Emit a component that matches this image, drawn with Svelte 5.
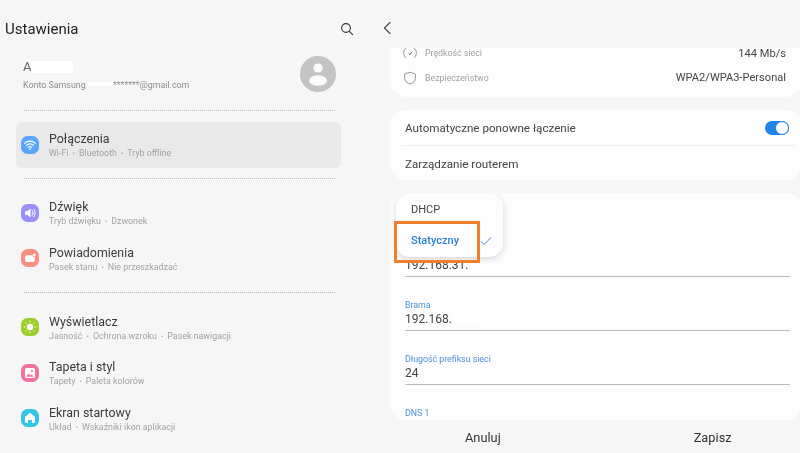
<script>
  const groups = [
    [{ t: 'Połączenia', s: ['Wi-Fi', 'Bluetooth', 'Tryb offline'], c: '#5aa5fb', i: 'wifi', active: true }],
    [
      { t: 'Dźwięk', s: ['Tryb dźwięku', 'Dzwonek'], c: '#9a90f8', i: 'sound' },
      { t: 'Powiadomienia', s: ['Pasek stanu', 'Nie przeszkadzać'], c: '#fb8f82', i: 'notif' }
    ],
    [
      { t: 'Wyświetlacz', s: ['Jasność', 'Ochrona wzroku', 'Pasek nawigacji'], c: '#9ccf2c', i: 'sun' },
      { t: 'Tapeta i styl', s: ['Tapety', 'Paleta kolorów'], c: '#f2739a', i: 'wall' },
      { t: 'Ekran startowy', s: ['Układ', 'Wskaźniki ikon aplikacji'], c: '#35c5e8', i: 'home' }
    ]
  ];
  const fields = [
    { l: 'Brama', v: '192.168.', blur: true },
    { l: 'Długość prefiksu sieci', v: '24' }
  ];
</script>

<div class="screen">
  <section class="left">
    <header class="lhead">
      <h1>Ustawienia</h1>
      <svg class="search" viewBox="0 0 14 14" width="14" height="14" fill="none" stroke="#333" stroke-width="1.1"><circle cx="6" cy="6" r="4.4" /><path d="M9.3 9.3 12.6 12.6" stroke-linecap="round" /></svg>
    </header>

    <div class="profile">
      <div class="who">
        <div class="name"><span class="letter">A</span><span class="smudge"></span></div>
        <div class="acct">Konto Samsung <span class="gap"></span>*******@gmail.com</div>
      </div>
      <svg class="avatar" viewBox="0 0 36 36" width="36" height="36">
        <circle cx="18" cy="18" r="18" fill="#c4c4c4" />
        <circle cx="18" cy="12" r="4.6" fill="#fbfbfb" />
        <ellipse cx="18" cy="24.5" rx="9" ry="5.2" fill="#fbfbfb" />
      </svg>
    </div>

    {#each groups as g}
      <div class="dots"></div>
      <div class="group">
        {#each g as it}
          <div class="item" class:active={it.active}>
            <svg class="ico" viewBox="0 0 18 18" width="18" height="18">
              <rect width="18" height="18" rx="6.5" fill={it.c} />
              {#if it.i === 'wifi'}
                <g fill="none" stroke="#fff" stroke-width="1.1" stroke-linecap="round">
                  <path d="M3.6 7.4a7.6 7.6 0 0 1 10.8 0" />
                  <path d="M5.4 9.4a5 5 0 0 1 7.2 0" />
                  <path d="M7.2 11.3a2.5 2.5 0 0 1 3.6 0" />
                </g>
                <circle cx="9" cy="13" r="0.9" fill="#fff" />
              {:else if it.i === 'sound'}
                <path d="M4 7.2h2.2L9.6 4.6v8.8L6.2 10.8H4z" fill="#fff" />
                <path d="M11.2 6.6a3.4 3.4 0 0 1 0 4.8M12.7 5.2a5.4 5.4 0 0 1 0 7.6" fill="none" stroke="#fff" stroke-width="1" stroke-linecap="round" />
              {:else if it.i === 'notif'}
                <path d="M5.8 6.2h6.4a1.6 1.6 0 0 1 1.6 1.6v2.6a2.6 2.6 0 0 1-2.6 2.6H6.6a2.6 2.6 0 0 1-2.6-2.6V8a1.8 1.8 0 0 1 1.8-1.8z" fill="#fff" />
                <circle cx="13.2" cy="6" r="1.7" fill="#fff" stroke={it.c} stroke-width="0.7" />
              {:else if it.i === 'sun'}
                <circle cx="9" cy="9" r="3.2" fill="#fff" />
                <g stroke="#fff" stroke-width="1" stroke-linecap="round">
                  <path d="M9 3.2v.6M9 14.2v.6M3.2 9h.6M14.2 9h.6M4.9 4.9l.4.4M12.7 12.7l.4.4M4.9 13.1l.4-.4M12.7 5.3l.4-.4" />
                </g>
              {:else if it.i === 'wall'}
                <rect x="4" y="4" width="10" height="10" rx="1.6" fill="#fff" />
                <circle cx="11" cy="7" r="1.1" fill={it.c} />
                <path d="M5 12.8l2.6-3.4 2 2 1.2-1 2.2 2.4z" fill={it.c} />
              {:else}
                <path d="M9 3.8 14 8v4.4a1.6 1.6 0 0 1-1.6 1.6H11v-3H7v3H5.6A1.6 1.6 0 0 1 4 12.4V8z" fill="#fff" />
              {/if}
            </svg>
            <div class="itxt">
              <div class="ttl">{it.t}</div>
              <div class="sub">
                {#each it.s as s, i}{#if i > 0}<span class="sep">•</span>{/if}{s}{/each}
              </div>
            </div>
          </div>
        {/each}
      </div>
    {/each}
  </section>

  <section class="right">
    <header class="rhead">
      <svg viewBox="0 0 10 14" width="10" height="14" fill="none" stroke="#444" stroke-width="1.1"><path d="M8 1.5 2.4 7 8 12.5" stroke-linecap="round" stroke-linejoin="round" /></svg>
    </header>

    <div class="card info">
      <div class="irow">
        <svg viewBox="0 0 14 14" width="14" height="14" fill="none" stroke="#999" stroke-width="1"><path d="M3 12A6.4 6.4 0 1 1 11 12" /><path d="M5.6 7.6 6.8 8.8 9 5.6" stroke="#666" /></svg>
        <span class="ilabel">Prędkość sieci</span><span class="ival">144 Mb/s</span>
      </div>
      <div class="irow">
        <svg viewBox="0 0 14 14" width="14" height="14" fill="none" stroke="#999" stroke-width="1"><path d="M7 1.2 12.4 3v4.2c0 2.9-2.3 4.8-5.4 5.8-3.1-1-5.4-2.9-5.4-5.8V3z" stroke-linejoin="round" /></svg>
        <span class="ilabel">Bezpieczeństwo</span><span class="ival">WPA2/WPA3-Personal</span>
      </div>
    </div>

    <div class="card opts">
      <div class="orow bordered">
        <span>Automatyczne ponowne łączenie</span>
        <span class="toggle"><i></i></span>
      </div>
      <div class="orow"><span>Zarządzanie routerem</span></div>
    </div>

    <div class="card form">
      <div class="field first">
        <div class="val">192.168.31.<span class="smudge2"></span></div>
      </div>
      {#each fields as f}
        <div class="field">
          <div class="lab">{f.l}</div>
          <div class="val">{f.v}{#if f.blur}<span class="smudge2"></span>{/if}</div>
        </div>
      {/each}
      <div class="field last"><div class="lab">DNS 1</div></div>

      <div class="menu">
        <div class="mi">DHCP</div>
        <div class="mi sel">Statyczny
          <svg viewBox="0 0 12 10" width="12" height="10" fill="none" stroke="#3f86d8" stroke-width="1"><path d="M1 5.4 4.2 8.6 11 1.4" /></svg>
        </div>
      </div>
      <div class="mark"></div>
    </div>

    <footer class="actions">
      <span class="cancel">Anuluj</span>
      <span class="save">Zapisz</span>
    </footer>
  </section>
</div>

<style>
  :global(body) { margin: 0; background: #f6f6f6; overflow: hidden; }
  .screen {
    width: 800px; height: 453px; display: flex; overflow: hidden; background: #f6f6f6;
    font-family: Roboto, "Liberation Sans", sans-serif; color: #333; filter: blur(0.45px);
  }
  .left { width: 390px; flex: none; }
  .lhead { height: 51px; display: flex; align-items: center; justify-content: space-between; padding: 7px 36px 0 5px; box-sizing: border-box; }
  h1 { margin: 0; font-size: 15px; font-weight: 400; color: #222; }
  .search { display: block; }
  .profile { height: 46px; margin: 0 54px 0 23px; display: flex; align-items: center; justify-content: space-between; }
  .name { height: 15px; margin-bottom: 6px; font-size: 13px; line-height: 15px; display: flex; }
  .letter { color: #666; }
  .smudge { display: block; width: 42px; height: 12px; margin-top: 2px; background: #fff; }
  .acct { font-size: 8.9px; color: #8f8f8f; white-space: nowrap; }
  .gap { display: inline-block; width: 25px; height: 4px; background: #fff; vertical-align: 2px; }
  .dots { height: 0; border-top: 1px dotted #bdbdbd; margin: 0 55px 0 24px; }
  .profile + .dots { margin-top: 13px; }
  .group { padding: 11px 49px 11px 16px; }
  .group:has(.active) { padding-bottom: 10.4px; }
  .item { height: 45.6px; display: flex; align-items: center; border-radius: 6px; padding: 0 5px; box-sizing: border-box; }
  .item.active { background: #e9e9e9; }
  .ico { flex: none; margin-right: 10px; }
  .itxt { padding-top: 2.4px; }
  .ttl { font-size: 12.4px; color: #3c3c3c; line-height: 15px; }
  .sub { font-size: 8.9px; color: #a3a3a3; line-height: 12px; margin-top: 1px; white-space: nowrap; }
  .sep { margin: 0 4px; font-size: 7px; }

  .right { width: 410px; flex: none; }
  .rhead { height: 48px; display: flex; align-items: center; padding: 8px 0 0; margin-left: -8px; box-sizing: border-box; }
  .card { background: #fdfdfd; border-radius: 16px; width: 412px; box-sizing: border-box; }
  .info { height: 49px; overflow: hidden; padding: 0 14px 0 13px; border-radius: 0 0 16px 16px; margin-bottom: 13px; }
  .irow { height: 24.5px; display: flex; align-items: center; }
  .irow:first-child { margin-top: -7px; }
  .irow svg { flex: none; margin-right: 8px; }
  .ilabel { font-size: 8.8px; color: #a2a2a2; }
  .ival { margin-left: auto; margin-right: 2px; font-size: 11.1px; color: #444; }
  .opts { height: 70px; padding: 0 7px 0 12px; margin-bottom: 13px; }
  .orow { height: 35px; display: flex; align-items: center; justify-content: space-between; padding: 0 6px 0 3px; font-size: 11.65px; color: #444; }
  .bordered { border-bottom: 1px solid #efefef; }
  .toggle { width: 24px; height: 14px; border-radius: 7px; background: #1f86e6; position: relative; }
  .toggle i { position: absolute; right: 0; top: 0; width: 12px; height: 12px; border-radius: 50%; background: #fff; border: 1px solid #1f86e6; }
  .form { height: 227px; position: relative; overflow: hidden; padding: 0 12px 0 15px; }
  .field { border-bottom: 1px solid #bcbcbc; height: 54px; box-sizing: border-box; padding-top: 23px; }
  .field.first { height: 84px; padding-top: 65px; }
  .lab { font-size: 8.8px; color: #4a93d8; line-height: 11px; margin-bottom: 1px; }
  .field .val { font-size: 12px; color: #444; line-height: 14px; }
  .field.last { border: 0; }
  .smudge2 { display: inline-block; width: 28px; height: 9px; background: #fff; }
  .menu { position: absolute; left: 6px; top: 0; width: 107px; height: 64px; padding-top: 1px; box-sizing: border-box; background: #fdfdfd; border-radius: 14px; box-shadow: 0 2px 7px rgba(0,0,0,.16); }
  .mi { height: 31px; display: flex; align-items: center; padding-left: 15px; font-size: 11px; color: #444; position: relative; }
  .mi.sel { color: #2a7fd6; font-weight: 500; }
  .mi.sel svg { position: absolute; left: 84px; top: 11px; }
  .mark { position: absolute; left: 4px; top: 28px; width: 86px; height: 42px; box-sizing: border-box; border: 3px solid #f07f2e; }
  .actions { display: flex; height: 35px; align-items: center; font-size: 12.8px; color: #333; }
  .cancel { margin-left: 75px; }
  .save { margin-left: 193px; }
</style>
